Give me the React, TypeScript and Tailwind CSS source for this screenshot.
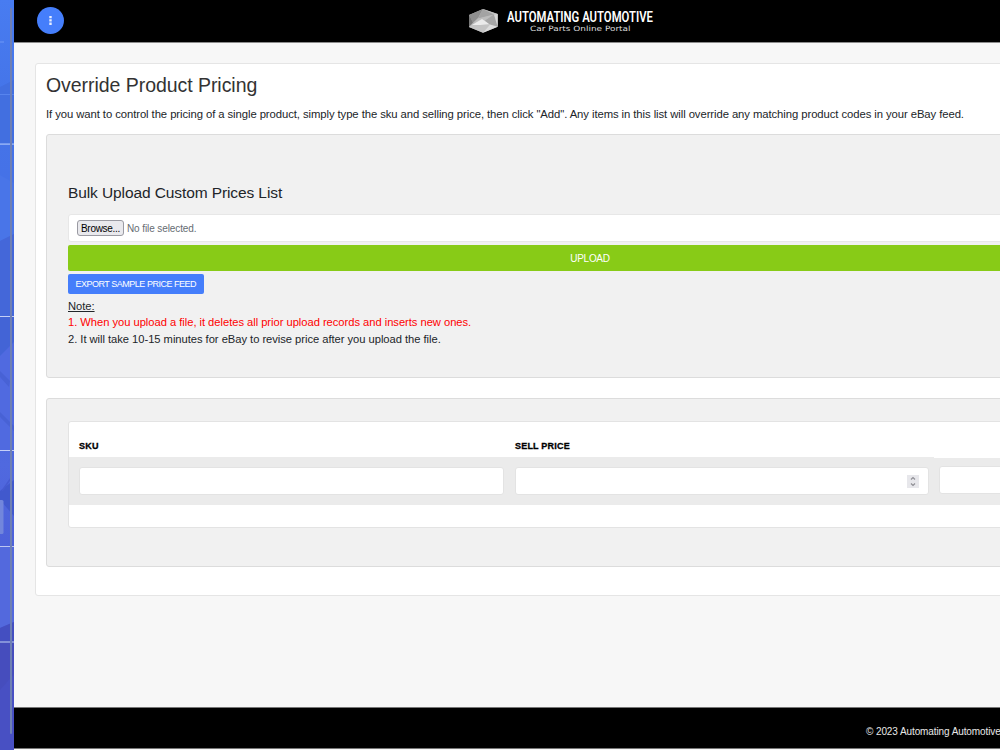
import React from "react";

function SidebarEdge() {
  return (
    <svg className="block h-[750px] w-[14px]" viewBox="0 0 14 750" preserveAspectRatio="none">
      <defs>
        <linearGradient id="side" x1="0" y1="0" x2="0" y2="1">
          <stop offset="0" stopColor="#487cf1" />
          <stop offset="0.12" stopColor="#4575e9" />
          <stop offset="0.3" stopColor="#4570e6" />
          <stop offset="0.48" stopColor="#4566da" />
          <stop offset="0.62" stopColor="#5069df" />
          <stop offset="0.8" stopColor="#4b5cd6" />
          <stop offset="1" stopColor="#464bbe" />
        </linearGradient>
      </defs>
      <rect width="14" height="750" fill="url(#side)" />
      <path d="M0 87L14 80V143H0Z" fill="#426fe0" />
      <path d="M0 175L14 183V234L0 241Z" fill="#4975e8" />
      <path d="M0 241L14 234V316H0Z" fill="#4467d9" />
      <path d="M0 317H14V342L0 356Z" fill="#4364d6" />
      <path d="M0 356L14 342V450H0Z" fill="#506ae0" />
      <path d="M0 371L10 381L9 387L0 377ZM0 412L14 426V431L0 417Z" fill="#4862d5" />
      <path d="M0 491L14 480V516L0 500Z" fill="#4159cd" />
      <path d="M2 491L11 478" stroke="#465bd1" strokeWidth="1.5" />
      <path d="M0 547H14V622L0 628Z" fill="#5369dd" />
      <path d="M0 628L14 622V642H0Z" fill="#444fc1" />
      <rect y="643" width="14" height="107" fill="#464dbd" />
      <path d="M0 690L14 674V750H0Z" fill="#4850c3" />
      <rect y="41.5" width="4" height="1" fill="#6e98f5" />
      <rect y="94" width="14" height="1" fill="#5784ee" />
      <rect y="143.5" width="14" height="1.2" fill="#a9c2f8" />
      <rect y="316" width="14" height="1" fill="#c4cff7" />
      <rect y="450" width="14" height="1" fill="#c6d0f8" />
      <rect y="546" width="14" height="1" fill="#bcc5f2" />
      <rect y="641" width="14" height="2" fill="#8390d9" />
      <rect x="-3" y="500" width="6.5" height="34" rx="1.5" fill="#7286dc" />
      <rect x="10" y="8" width="2" height="726" rx="1" fill="#6f80b4" />
    </svg>
  );
}

function Logo() {
  return (
    <svg className="block h-[30px] w-[190px]" viewBox="0 0 190 30">
      <path d="M1 9L15 3L29.7 8L29.7 20.7L15 26.7L1 21Z" fill="#b4b4b4" />
      <path d="M1 9L15 3L10 12L5 16.5Z" fill="#8f8f8f" />
      <path d="M15 3L26 8.5L10 12.5Z" fill="#a3a3a3" />
      <path d="M15 3L29.7 8L26 8.5Z" fill="#c2c2c2" />
      <path d="M1 9L5 16.5L1 21Z" fill="#777" />
      <path d="M26 8.5L10 12.5L5 18L19 14.5Z" fill="#bdbdbd" />
      <path d="M14 13L22 18.5L3 19.5Z" fill="#ebebeb" />
      <path d="M26 8.5L29.7 20.7L22 18.5L17 14.5Z" fill="#a6a6a6" />
      <path d="M26 8.5L29.7 8V20.7Z" fill="#d8d8d8" />
      <path d="M1 21L3 19.5L22 18.5L15 26.7Z" fill="#c4c4c4" />
      <path d="M22 18.5L29.7 20.7L15 26.7Z" fill="#dcdcdc" />
      <text x="39" y="16.1" fill="#fff" fontFamily="Roboto, sans-serif" fontWeight="600" fontSize="15" textLength="146" lengthAdjust="spacingAndGlyphs">AUTOMATING AUTOMOTIVE</text>
      <text x="62" y="24.8" fill="#dedede" fontFamily="DejaVu Sans, sans-serif" fontSize="7.2" textLength="100.5" lengthAdjust="spacingAndGlyphs">Car Parts Online Portal</text>
    </svg>
  );
}

function Spinner() {
  return (
    <span className="flex h-[13px] w-[12px] items-center justify-center bg-[#e7e7eb]">
      <svg className="h-[11px] w-[8px]" viewBox="0 0 8 11" fill="none" stroke="#8f8f95" strokeWidth="1.2">
        <path d="M2 3.5L4 1.5L6 3.5M2 7.5L4 9.5L6 7.5" />
      </svg>
    </span>
  );
}

export default function App() {
  return (
    <div className="flex h-[750px] w-[1000px] overflow-hidden bg-[#f7f7f7] font-['Liberation_Sans',Arial,sans-serif] text-[#212529]">
      <aside className="w-[14px] shrink-0">
        <SidebarEdge />
      </aside>
      <div className="flex w-[986px] shrink-0 flex-col">
        <header className="flex h-[43px] shrink-0 border-b border-[#8c8c8c] bg-black">
          <button className="mt-[7px] ml-[23px] flex h-[27px] w-[27px] items-center justify-center rounded-full bg-[#457efb]">
            <svg className="h-[9px] w-[3px]" viewBox="0 0 3 9" fill="#e8efff">
              <path d="M.3 0H2.7V2.3H.3ZM.3 3.3H2.7V5.6H.3ZM.3 6.6H2.7V8.9H.3Z" />
            </svg>
          </button>
          <div className="mt-[6px] ml-[404px]">
            <Logo />
          </div>
        </header>
        <main className="h-[664px] shrink-0 pt-[20px] pl-[21px]">
          <section className="h-[533px] w-[1000px] rounded-[3px] border border-[#e5e5e5] bg-white pl-[10px]">
            <h1 className="mt-[9px] h-[24px] text-[19.5px] leading-[24px] tracking-[-0.05px] whitespace-nowrap text-[#333]">Override Product Pricing</h1>
            <p className="mt-[9px] h-[16px] text-[11.3px] leading-[16px] tracking-[-0.077px] whitespace-nowrap">
              If you want to control the pricing of a single product, simply type the sku and selling price, then click "Add". Any items in this list will override any matching product codes in your eBay feed.
            </p>
            <div className="mt-[12px] h-[244px] w-[1088px] rounded-[3px] border border-[#dcdcdc] bg-[#f1f1f1] px-[21px] pt-[48px]">
              <h2 className="h-[20px] text-[15.5px] leading-[20px] tracking-[-0.1px] whitespace-nowrap">Bulk Upload Custom Prices List</h2>
              <div className="mt-[11px] flex h-[28px] items-center rounded-[3px] border border-[#e7e7e7] bg-white pl-[8px]">
                <span className="flex h-[16px] w-[47px] items-center justify-center rounded-[3px] border border-[#9a9aa2] bg-[#e9e9ed] text-[10px] tracking-[-0.3px] whitespace-nowrap text-black">Browse...</span>
                <span className="ml-[3px] text-[10px] tracking-[-0.1px] whitespace-nowrap text-[#666c72]">No file selected.</span>
              </div>
              <button className="mt-[2.5px] flex h-[26.5px] w-full items-center justify-center rounded-[2px] bg-[#88cb17] pt-[1px] text-[10px] tracking-[-0.3px] text-white">UPLOAD</button>
              <button className="mt-[3px] flex h-[20px] w-[135.5px] items-center justify-center rounded-[2px] bg-[#457efb] pt-[1px] text-[9px] tracking-[-0.48px] whitespace-nowrap text-white">EXPORT SAMPLE PRICE FEED</button>
              <div className="mt-[3.6px] text-[11.2px] leading-[16.5px] tracking-[-0.035px] whitespace-nowrap">
                <p className="underline">Note:</p>
                <p className="text-[#ff0000]">1. When you upload a file, it deletes all prior upload records and inserts new ones.</p>
                <p>2. It will take 10-15 minutes for eBay to revise price after you upload the file.</p>
              </div>
            </div>
            <div className="mt-[20px] h-[169px] w-[1088px] rounded-[3px] border border-[#dcdcdc] bg-[#f1f1f1] px-[21px] pt-[22px]">
              <div className="h-[107px] rounded-[3px] border border-[#e3e3e3] bg-white">
                <div className="flex h-[35px] pt-[18px] pl-[10px] text-[9px] leading-[12px] font-bold tracking-[0.2px] text-black [-webkit-text-stroke:0.3px_#000]">
                  <span className="w-[436px]">SKU</span>
                  <span>SELL PRICE</span>
                </div>
                <div className="flex h-[48px] bg-[#ebebeb]">
                  <div className="flex w-[865px] shrink-0 gap-[11px] pt-[10px] pl-[10px]">
                    <div className="h-[28px] w-[424.5px] shrink-0 rounded-[3px] border border-[#e3e3e3] bg-white" />
                    <div className="flex h-[28px] w-[414px] shrink-0 items-center justify-end rounded-[3px] border border-[#e3e3e3] bg-white pr-[9px]">
                      <Spinner />
                    </div>
                  </div>
                  <div className="flex-1 border-t border-white pt-[8px] pl-[5px]">
                    <div className="h-[28px] w-[150px] rounded-[3px] border border-[#e3e3e3] bg-white" />
                  </div>
                </div>
              </div>
            </div>
          </section>
        </main>
        <footer className="flex h-[42px] shrink-0 border-y border-[#777] bg-black pt-[16px] pl-[852px] text-[10px] leading-[16px] tracking-[-0.1px] whitespace-nowrap text-[#e8e8e8]">
          © 2023 Automating Automotive
        </footer>
      </div>
    </div>
  );
}
